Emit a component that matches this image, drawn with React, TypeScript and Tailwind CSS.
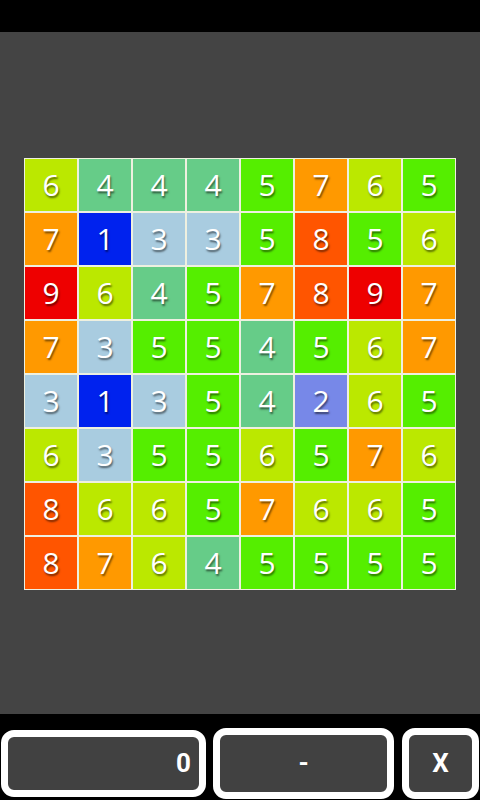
import React from "react";

const grid = [
  [6, 4, 4, 4, 5, 7, 6, 5],
  [7, 1, 3, 3, 5, 8, 5, 6],
  [9, 6, 4, 5, 7, 8, 9, 7],
  [7, 3, 5, 5, 4, 5, 6, 7],
  [3, 1, 3, 5, 4, 2, 6, 5],
  [6, 3, 5, 5, 6, 5, 7, 6],
  [8, 6, 6, 5, 7, 6, 6, 5],
  [8, 7, 6, 4, 5, 5, 5, 5],
];

const colorClass: Record<number, string> = {
  1: "bg-[#0022ee]",
  2: "bg-[#7788e8]",
  3: "bg-[#a9cce0]",
  4: "bg-[#66cc88]",
  5: "bg-[#55ee00]",
  6: "bg-[#bbe800]",
  7: "bg-[#ff9900]",
  8: "bg-[#ff5500]",
  9: "bg-[#ee0000]",
};

export default function App() {
  return (
    <div className="w-[480px] h-[800px] flex flex-col bg-black overflow-hidden" style={{ fontFamily: '"Open Sans", "Noto Sans", sans-serif' }}>
      <div className="h-[32px] bg-black" />
      <div className="h-[682px] bg-[#444444] flex flex-col items-center pt-[126px]">
        <div className="grid grid-cols-8 w-[432px]">
          {grid.flat().map((n, i) => (
            <div
              key={i}
              className={`h-[54px] border border-[#eef0e0] flex items-center justify-center text-white text-[30px] leading-none ${colorClass[n]}`}
              style={{ textShadow: "1px 2px 2px rgba(0,0,0,0.55)" }}
            >
              {n}
            </div>
          ))}
        </div>
      </div>
      <div className="flex-1 bg-black flex items-start" style={{ fontFamily: 'Roboto, "Liberation Sans", sans-serif' }}>
        <div className="ml-[1px] mt-[16px] h-[67px] w-[205px] border-[7px] border-white rounded-[13px] bg-[#414141] flex items-center justify-end pr-[8px] text-white font-bold text-[26px]">
          0
        </div>
        <div className="ml-[7px] mt-[14px] h-[71px] w-[181px] border-[7px] border-white rounded-[13px] bg-[#414141] flex items-center justify-center text-white font-bold text-[26px]">
          -
        </div>
        <div className="ml-[8px] mt-[14px] h-[71px] w-[77px] border-[7px] border-white rounded-[13px] bg-[#414141] flex items-center justify-center text-white font-bold text-[26px]">
          X
        </div>
      </div>
    </div>
  );
}
